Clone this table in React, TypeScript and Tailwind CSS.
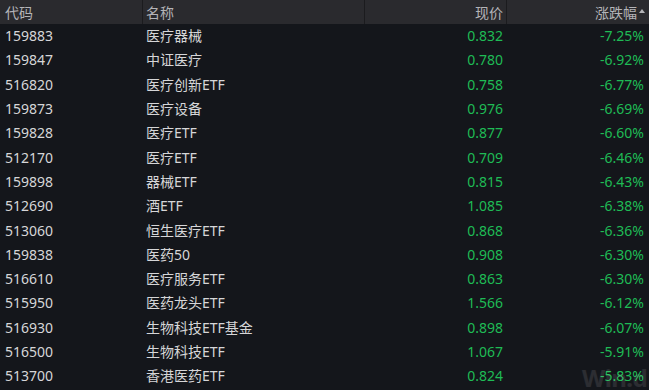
const rows: [string, string, string, string][] = [
  ['159883', '医疗器械', '0.832', '-7.25%'],
  ['159847', '中证医疗', '0.780', '-6.92%'],
  ['516820', '医疗创新ETF', '0.758', '-6.77%'],
  ['159873', '医疗设备', '0.976', '-6.69%'],
  ['159828', '医疗ETF', '0.877', '-6.60%'],
  ['512170', '医疗ETF', '0.709', '-6.46%'],
  ['159898', '器械ETF', '0.815', '-6.43%'],
  ['512690', '酒ETF', '1.085', '-6.38%'],
  ['513060', '恒生医疗ETF', '0.868', '-6.36%'],
  ['159838', '医药50', '0.908', '-6.30%'],
  ['516610', '医疗服务ETF', '0.863', '-6.30%'],
  ['515950', '医药龙头ETF', '1.566', '-6.12%'],
  ['516930', '生物科技ETF基金', '0.898', '-6.07%'],
  ['516500', '生物科技ETF', '1.067', '-5.91%'],
  ['513700', '香港医药ETF', '0.824', '-5.83%'],
]

export default function App() {
  return (
    <div
      className="relative h-[390px] w-[649px] overflow-hidden bg-[#14161b] text-[14px]"
      style={{ fontFamily: '"Noto Sans", "Noto Sans CJK SC", sans-serif' }}
    >
      <div className="grid h-[24px] grid-cols-[143px_222px_142px_142px] bg-[#2a2a2e] text-[#b4b4b8]">
        <div className="flex items-center border-r border-[#1b1b1e] pl-[5px]">代码</div>
        <div className="flex items-center border-r border-[#1b1b1e] pl-[3px]">名称</div>
        <div className="flex items-center justify-end border-r border-[#1b1b1e] pr-[3px]">现价</div>
        <div className="flex items-center justify-end pr-[4px]">
          涨跌幅
          <span className="ml-[2px] mb-[3px] inline-block h-0 w-0 border-x-[3px] border-b-[4px] border-x-transparent border-b-[#b4b4b8]" />
        </div>
      </div>
      <div className="flex flex-col">
        {rows.map(([code, name, price, chg]) => (
          <div key={code} className="grid h-[24.3px] grid-cols-[143px_222px_142px_142px] items-center leading-none">
            <div className="pl-[5px] text-[#d6d6d8]">{code}</div>
            <div className="pl-[3px] text-[#d6d6d8]">{name}</div>
            <div className="pr-[4px] text-right text-[#1fbb55]">{price}</div>
            <div className="pr-[5px] text-right text-[#1fbb55]">{chg}</div>
          </div>
        ))}
      </div>
      <div className="absolute bottom-0 right-[2px] text-[24px] leading-none font-bold tracking-tight text-white/10">Win.d</div>
    </div>
  )
}
